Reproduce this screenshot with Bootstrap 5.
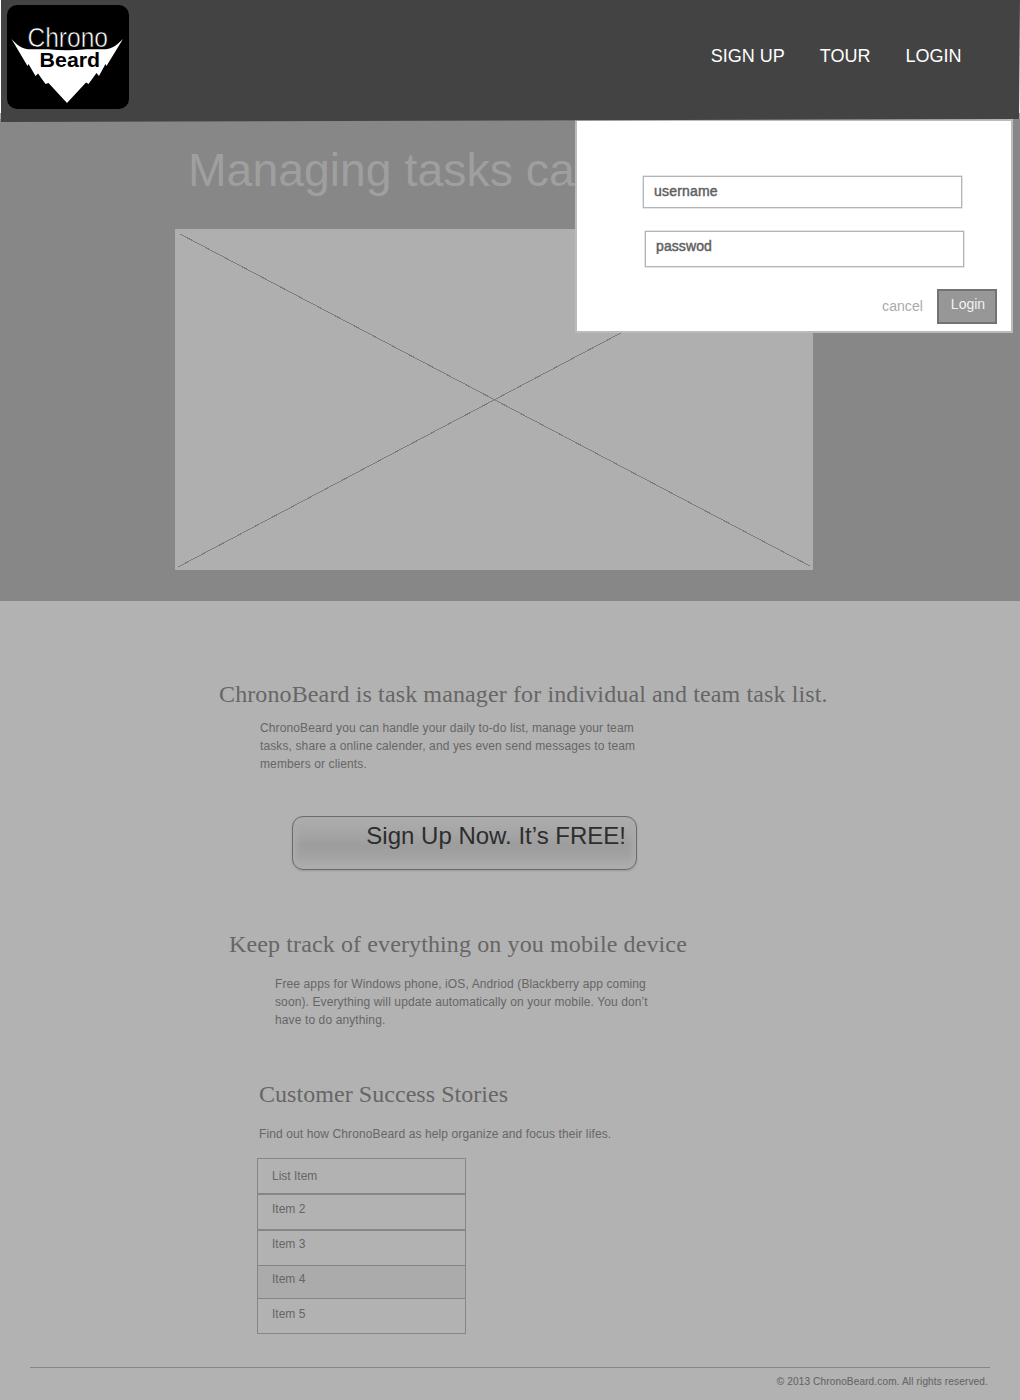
<!DOCTYPE html>
<html lang="en">
<head>
<meta charset="utf-8">
<meta name="viewport" content="width=device-width, initial-scale=1">
<title>ChronoBeard</title>
<link href="https://cdn.jsdelivr.net/npm/bootstrap@5.3.0/dist/css/bootstrap.min.css" rel="stylesheet">
<style>
body{background:#b2b2b2;color:#666;font:12px/18px "Liberation Sans",Arial,sans-serif}
.topwrap{height:119px;z-index:3;background:linear-gradient(#fff 113px,#ababab 113px)}
.topbar{height:122px;padding:5px 58.5px 0 7px;background:#434343;clip-path:polygon(1px 0,100% 0,1019px 119px,1px 122px)}
.topbar .nav{gap:35px;padding-top:38px}
.topbar .nav-link{padding:0;color:#fff;font-size:18px;line-height:27px}
.hero{height:482px;background:#878787;padding-top:26px}
.hero h1{margin:0 0 34px 188px;font-size:46.3px;line-height:50px;font-weight:400;letter-spacing:.04px;color:#9f9f9f;white-space:nowrap}
.video{display:block;margin-left:175px;background:#afafaf}
.login-panel{left:575px;top:119px;width:438px;height:214px;z-index:2;background:#fff;border:2px solid #bbb;padding:55px 14px 0 66px}
.login-panel .form-control{width:319px;height:32px;border:1px solid #b4b4b4;outline:0;box-shadow:0 0 0 .5px #ccc;border-radius:0;padding:4px 10px 7px;font-size:14px;line-height:20px;letter-spacing:.2px;color:#606060;-webkit-text-stroke:.45px #606060}
.login-panel .pass{height:36px;margin:23px 0 0 2px;padding:4px 10px 11px;letter-spacing:.1px}
.login-panel .actions{margin-top:22px;gap:14px;font-size:14px;line-height:20px}
.login-panel .cancel{color:#aaa;text-decoration:none;padding-top:7px;letter-spacing:.08px}
.login-panel .btn{width:60px;height:35px;border:2px solid #737373;border-radius:0;background:#979797;color:#f2f2f2;font-size:14px;line-height:20px;padding:3px 0 0 2px}
h2{font:24px/28px "Liberation Serif","Times New Roman",serif;letter-spacing:.12px;margin:0;white-space:nowrap}
main p{letter-spacing:.115px}
.intro{padding:79px 0 0 219px}
.intro p{margin:11px 0 43px 41px;width:400px}
.signup{display:block;margin-left:73px;width:345px;height:54px;border:1.5px solid #6c6c6c;border-radius:11px;padding:4px 10px 0 0;text-align:right;font-size:24px;line-height:30px;color:#2d2d2d;background:linear-gradient(#adadad 0,#a7a7a7 25%,#9d9d9d 55%,#a2a2a2 75%,#afafaf 100%);box-shadow:inset 3px 0 6px #adadad,inset -3px 0 6px #adadad,inset 0 0 1px #6c6c6c,0 1px 2px #999;white-space:nowrap}
.mobile{padding:60px 0 0 229px}
.mobile p{margin:17px 0 0 46px;width:400px}
.stories{padding:51px 0 0 259px}
.stories h2{letter-spacing:.05px}
.stories p{margin:17px 0 15px}
.stories .list-group{width:209px;margin-left:-2px;border-radius:0}
.stories .list-group-item{background:none;color:#666;border:1px solid #868686;border-radius:0;height:36px;padding:5px 14px 0}
.stories .list-group-item:nth-child(1){padding-top:8px}
.stories .list-group-item:nth-child(3){padding-top:4px}
.stories .list-group-item:nth-child(4){height:33px;padding-top:4px;border-top:0;background:#ababab}
.stories .list-group-item:nth-child(5){height:35px;padding-top:6px;border-top:0}
.foot{margin:33px 30px 0;border-top:1px solid #868686;padding:6px 2px 0 0;text-align:right;font-size:10px;line-height:15px;letter-spacing:.16px;-webkit-text-stroke:.1px #666;height:33px}
</style>
</head>
<body>
<div class="topwrap position-relative">
  <header class="topbar d-flex justify-content-between align-items-start">
    <a href="#" aria-label="ChronoBeard"><svg class="d-block" width="122" height="104" viewBox="7 5 122 104">
      <rect x="7" y="5" width="122" height="104" rx="10" fill="#000"/>
      <path fill="#fff" d="M11.5 39C16 44 21 48.5 28 49.2H48Q67 51.5 86 49.2H106C113 48.5 118 44 123 39L106.5 66L105.5 64L99 76L96.5 73L88.5 84L86 82.5L67 103L48.5 83L45.5 84L38 73.5L35.5 76L28.5 64L27.5 66Z"/>
      <text x="27.5" y="47.3" font-size="28" textLength="80.5" lengthAdjust="spacingAndGlyphs" fill="#fff" stroke="#000" stroke-width=".6">Chrono</text>
      <text x="39.6" y="67.4" font-size="20.5" font-weight="700" textLength="60.5" lengthAdjust="spacingAndGlyphs">Beard</text>
    </svg></a>
    <nav class="nav">
      <a class="nav-link" href="#">SIGN UP</a>
      <a class="nav-link" href="#">TOUR</a>
      <a class="nav-link" href="#">LOGIN</a>
    </nav>
  </header>
</div>
<form class="login-panel position-absolute">
  <input class="form-control" type="text" value="username" aria-label="username">
  <input class="form-control pass" type="text" value="passwod" aria-label="password">
  <div class="actions d-flex justify-content-end align-items-start">
    <a class="cancel" href="#">cancel</a>
    <button class="btn d-flex justify-content-center align-items-start" type="button">Login</button>
  </div>
</form>
<section class="hero overflow-hidden">
  <h1>Managing tasks ca</h1>
  <svg class="video" width="638" height="341" viewBox="0 0 638 341" shape-rendering="crispEdges" stroke="#7c7c7c" stroke-width="1">
    <path d="M5 5L635 337M3 338L635 4" fill="none"/>
  </svg>
</section>
<main>
  <section class="intro">
    <h2>ChronoBeard is task manager for individual and team task list.</h2>
    <p>ChronoBeard you can handle your daily to-do list, manage your team<br>tasks, share a online calender, and yes even send messages to team<br>members or clients.</p>
    <button class="signup" type="button"><span class="d-block h-100">Sign Up Now. It’s FREE!</span></button>
  </section>
  <section class="mobile">
    <h2>Keep track of everything on you mobile device</h2>
    <p>Free apps for Windows phone, iOS, Andriod (Blackberry app coming<br>soon). Everything will update automatically on your mobile. You don’t<br>have to do anything.</p>
  </section>
  <section class="stories">
    <h2>Customer Success Stories</h2>
    <p>Find out how ChronoBeard as help organize and focus their lifes.</p>
    <ul class="list-group">
      <li class="list-group-item">List Item</li>
      <li class="list-group-item">Item 2</li>
      <li class="list-group-item">Item 3</li>
      <li class="list-group-item">Item 4</li>
      <li class="list-group-item">Item 5</li>
    </ul>
  </section>
</main>
<footer class="foot">© 2013 ChronoBeard.com. All rights reserved.</footer>
<script src="https://cdn.jsdelivr.net/npm/bootstrap@5.3.0/dist/js/bootstrap.bundle.min.js"></script>
</body>
</html>
